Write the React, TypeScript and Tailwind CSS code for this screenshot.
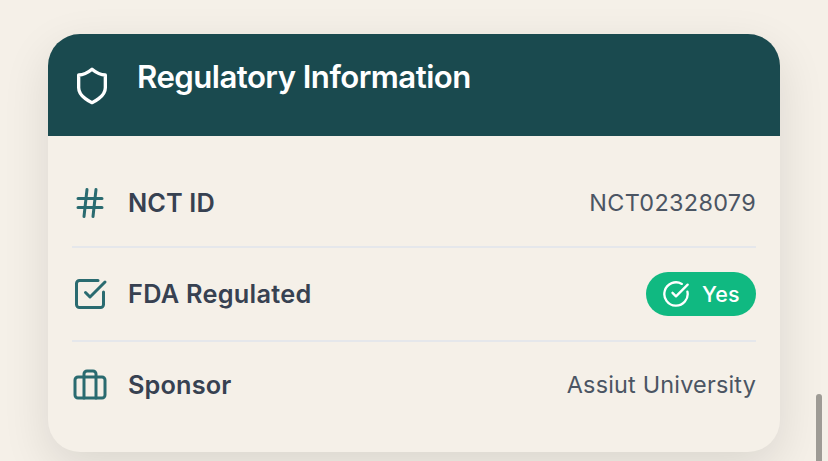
import React from "react";

type IconProps = { className?: string; children: React.ReactNode };

function Icon({ className, children }: IconProps) {
  return (
    <svg viewBox="0 0 24 24" fill="none" stroke="currentColor" strokeWidth={2} strokeLinecap="round" strokeLinejoin="round" className={className}>
      {children}
    </svg>
  );
}

type RowProps = { icon: React.ReactNode; label: string; labelClass: string; className: string; children: React.ReactNode };

function Row({ icon, label, labelClass, className, children }: RowProps) {
  return (
    <div className={`flex items-center justify-between ${className}`}>
      <div className="flex items-center gap-5">
        {icon}
        <span className={`text-[25.3px] leading-9 font-semibold whitespace-nowrap text-[#374151] ${labelClass}`}>{label}</span>
      </div>
      {children}
    </div>
  );
}

export default function App() {
  return (
    <div className="relative h-[461px] w-[828px] overflow-hidden bg-[#f5f0e8] px-12 pt-[34px] font-['Inter','Liberation_Sans',sans-serif]">
      <section className="h-[418px] overflow-hidden rounded-[32px] bg-[#f5f0e8] shadow-[0_16px_48px_rgba(0,0,0,0.11)]">
        <header className="flex h-[102px] items-start bg-[#1a4a4f] px-6 text-white">
          <Icon className="mt-8 size-10 shrink-0">
            <path d="M12 22s8-3.4 8-9V5.400c-3.400 0-5.600-1.400-8-3.400-2.400 2-4.600 3.400-8 3.400V13c0 5.600 8 9 8 9z" />
          </Icon>
          <h2 className="mt-[23px] ml-[25px] text-[31.2px] leading-10 font-semibold tracking-[-0.55px] whitespace-nowrap">Regulatory Information</h2>
        </header>
        <div className="px-6 pt-6">
          <Row
            label="NCT ID"
            labelClass="tracking-[0.1px]"
            className="h-[88px] border-b-2 border-[#e5e7eb]"
            icon={
              <Icon className="size-9 text-[#2a6b70]">
                <path d="M4 9h16M4 15h16M10 3 8 21M16 3l-2 18" />
              </Icon>
            }
          >
            <span className="text-[23.4px] tracking-[0.33px] text-[#4b5563]">NCT02328079</span>
          </Row>
          <Row
            label="FDA Regulated"
            labelClass="tracking-[0.28px]"
            className="h-[94px] border-b-2 border-[#e5e7eb]"
            icon={
              <Icon className="size-9 text-[#2a6b70]">
                <path d="M21 10.656V19a2 2 0 0 1-2 2H5a2 2 0 0 1-2-2V5a2 2 0 0 1 2-2h12.344" />
                <path d="m9 11 3 3L22 4" />
              </Icon>
            }
          >
            <span className="flex h-11 w-[110px] items-center gap-3 rounded-full bg-[#10b981] pl-4 text-white">
              <Icon className="size-7 shrink-0">
                <path d="M21.801 10A10 10 0 1 1 17 3.335" />
                <path d="m9 11 3 3L22 4" />
              </Icon>
              <span className="text-[21.5px] font-medium tracking-[0.2px]">Yes</span>
            </span>
          </Row>
          <Row
            label="Sponsor"
            labelClass="mb-px tracking-[0.15px]"
            className="h-[87px]"
            icon={
              <Icon className="size-9 text-[#2a6b70]">
                <path d="M16 20V4a2 2 0 0 0-2-2h-4a2 2 0 0 0-2 2v16" />
                <rect x="2" y="6" width="20" height="14" rx="2" />
              </Icon>
            }
          >
            <span className="mb-0.5 text-[23.4px] tracking-[0.2px] text-[#4b5563]">Assiut University</span>
          </Row>
        </div>
      </section>
      <div className="absolute top-[394px] left-[816px] h-[100px] w-1.5 rounded-full bg-[#9e9b95]" />
    </div>
  );
}
